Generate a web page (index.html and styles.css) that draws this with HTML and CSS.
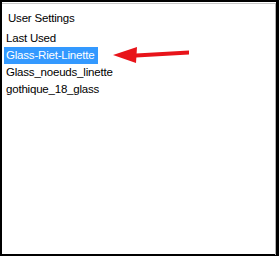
FILE: index.html
```html
<!DOCTYPE html>
<html lang="en">

<head>
    <meta charset="UTF-8">
    <title>User Settings</title>
    <link rel="stylesheet" href="styles.css">
</head>

<body>
    <div class="frame">
        <div class="panel">
            <div class="group-title">User Settings</div>
            <ul class="preset-list">
                <li>Last Used</li>
                <li class="selected">Glass-Riet-Linette</li>
                <li>Glass_noeuds_linette</li>
                <li>gothique_18_glass</li>
            </ul>

            <!-- pointer arrow -->
            <svg class="arrow" width="80" height="20" viewBox="0 0 80 20">
                <path d="M23 8.5 L76 5.5 L76 9.5 L23 12.5 Z" fill="#e8141a"/>
                <path d="M0 10 L24 2 L23 18 Z" fill="#e8141a"/>
            </svg>
        </div>
    </div>
</body>

</html>
```
FILE: styles.css
```css
* {
    margin: 0;
    padding: 0;
    box-sizing: border-box;
}

body {
    width: 279px;
    height: 256px;
    background: #fff;
    font-family: "Liberation Sans", Arial, sans-serif;
    font-size: 11.5px;
    letter-spacing: -0.2px;
    color: #000;
}

.frame {
    width: 279px;
    height: 256px;
    border-style: solid;
    border-color: #000;
    border-width: 2px 3px 2px 2px;
}

.panel {
    position: relative;
    height: 100%;
    border-top: 1px solid #c8c8c8;
    border-right: 1px solid #b4b4b4;
    margin-top: 1px;
    padding: 6px 0 0 2px;
}

.group-title {
    padding-left: 4px;
    line-height: 17px;
}

.preset-list {
    list-style: none;
    margin-top: 3px;
}

.preset-list li {
    float: left;
    clear: left;
    height: 17px;
    line-height: 17px;
    padding: 0 4px 0 2px;
}

.preset-list li.selected {
    background: #3399ff;
    color: #fff;
}

.arrow {
    position: absolute;
    left: 111px;
    top: 41px;
}
```
